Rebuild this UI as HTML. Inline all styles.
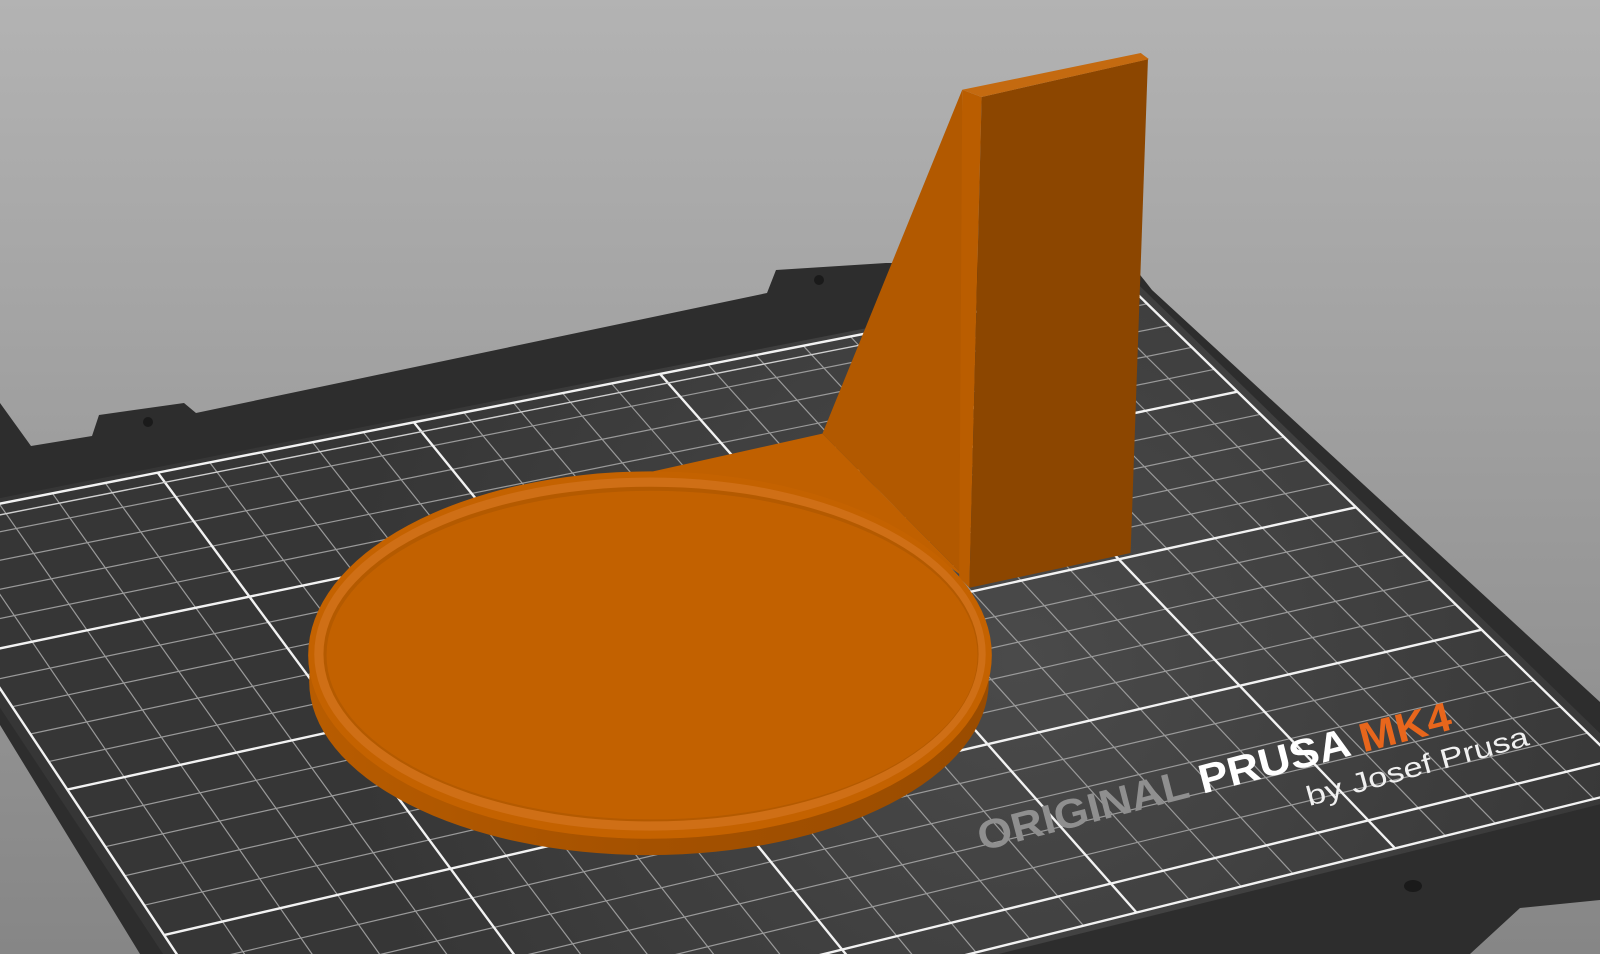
<!DOCTYPE html>
<html><head><meta charset="utf-8"><style>
html,body{margin:0;padding:0;width:1600px;height:954px;overflow:hidden;background:#999}
svg{display:block}
</style></head><body>
<svg id="s" width="1600" height="954" viewBox="0 0 1600 954" xmlns="http://www.w3.org/2000/svg">
<defs>
<linearGradient id="bg" x1="0" y1="0" x2="0" y2="1">
<stop offset="0" stop-color="#b3b3b3"/><stop offset="1" stop-color="#868686"/>
</linearGradient>
<radialGradient id="spot" cx="1020" cy="660" r="680" gradientUnits="userSpaceOnUse">
<stop offset="0" stop-color="#4a4a4a"/><stop offset="1" stop-color="#363636"/>
</radialGradient>
<linearGradient id="side" x1="0" y1="0" x2="1" y2="0">
<stop offset="0" stop-color="#b85c00"/><stop offset="0.5" stop-color="#a45100"/><stop offset="1" stop-color="#9a4c00"/>
</linearGradient>
<clipPath id="sheetclip"><polygon id="sheetpoly2" points=""/></clipPath>
</defs>
<rect width="1600" height="954" fill="url(#bg)"/>
<polygon fill="#2d2d2d" points="0,403 31,446 92,436 99,415 184,403 196,413 767,293 776,270 886,263 1130,262 1152,290 1600,702 1600,900 1520,908 1470,954 140,954 0,725"/>
<circle cx="148" cy="422" r="5" fill="#1a1a1a"/>
<circle cx="819" cy="280" r="5" fill="#1a1a1a"/>
<polygon id="sheet" fill="url(#spot)" points=""/>
<g id="grid" clip-path="url(#sheetclip)"></g>
<ellipse cx="1413" cy="886" rx="9" ry="6" fill="#1a1a1a"/>
<g transform="scale(1.0204)">
<text transform="translate(962,834) rotate(-14.5)" font-family="Liberation Sans, sans-serif" font-weight="bold" font-size="40" textLength="478" lengthAdjust="spacingAndGlyphs"><tspan fill="#8f8f8f">ORIGINAL </tspan><tspan fill="#ffffff">PRUSA </tspan><tspan fill="#e8661c">MK4</tspan></text>
<text transform="translate(1283,790) rotate(-15.5)" font-family="Liberation Sans, sans-serif" font-size="27" fill="#f0f0f0" textLength="225" lengthAdjust="spacingAndGlyphs">by Josef Prusa</text>
<polygon fill="#c06000" points="640,462 806,425 948,568 880,520"/>
<polygon fill="#b25900" points="943,88 806,425 948,568"/>
<polygon fill="#ba5d00" points="943,88 962,95 950,576 940,566"/>
<polygon fill="#8c4600" points="962,95 1125,58 1108,542 950,576"/>
<polygon fill="#c46a10" points="943,88 1118,52 1126,58 962,95"/>
<ellipse cx="636" cy="668" rx="333" ry="170" fill="url(#side)"/>
<ellipse cx="637" cy="642" rx="335" ry="180" fill="#c46200"/>
<ellipse cx="637" cy="641" rx="329" ry="173" fill="#cf6f16"/>
<ellipse cx="638" cy="641" rx="321" ry="164" fill="#b45a00"/>
<ellipse cx="639" cy="642" rx="319" ry="161" fill="#c26100"/>
</g>
</svg>
<script>
(function(){
var src=[[0,0],[50,0],[50,50],[0,100],[250,0],[250,50],[250,100],[250,150],[200,100],[150,150],[200,150],[150,210]];
var dst=[[-106,516],[150,465],[250,600],[72,803],[1139,297],[1222,383],[1352,502],[1490,628],[1114,558],[990,750],[1246,690],[1130,905]];
var M=[],b=[];
for(var i=0;i<src.length;i++){var x=src[i][0],y=src[i][1],X=dst[i][0],Y=dst[i][1];
M.push([x,y,1,0,0,0,-x*X,-y*X]);b.push(X);
M.push([0,0,0,x,y,1,-x*Y,-y*Y]);b.push(Y);}
var n=8,A=[],r=[];
for(var i=0;i<n;i++){A.push([]);r.push(0);for(var j=0;j<n;j++){var s=0;for(var k=0;k<M.length;k++)s+=M[k][i]*M[k][j];A[i].push(s);}
for(var k=0;k<M.length;k++)r[i]+=M[k][i]*b[k];}
for(var c=0;c<n;c++){var p=c;for(var q=c+1;q<n;q++)if(Math.abs(A[q][c])>Math.abs(A[p][c]))p=q;
var t=A[c];A[c]=A[p];A[p]=t;t=r[c];r[c]=r[p];r[p]=t;
for(var q=0;q<n;q++){if(q==c)continue;var f=A[q][c]/A[c][c];for(var k=c;k<n;k++)A[q][k]-=f*A[c][k];r[q]-=f*r[c];}}
var h=[];for(var i=0;i<n;i++)h.push(r[i]/A[i][i]);
function P(u,v){var w=h[6]*u+h[7]*v+1;return [(h[0]*u+h[1]*v+h[2])/w,(h[3]*u+h[4]*v+h[5])/w];}
var pts=[P(-2,-2),P(252,-2),P(252,212),P(-2,212)].map(function(p){return p[0].toFixed(1)+','+p[1].toFixed(1)}).join(' ');
document.getElementById('sheet').setAttribute('points',pts);
document.getElementById('sheetpoly2').setAttribute('points',pts);
var g=document.getElementById('grid'),s='';
function L(a,c,col,w){s+='<line x1="'+a[0].toFixed(1)+'" y1="'+a[1].toFixed(1)+'" x2="'+c[0].toFixed(1)+'" y2="'+c[1].toFixed(1)+'" stroke="'+col+'" stroke-width="'+w+'"/>';}
for(var u=10;u<250;u+=10){if(u%50)L(P(u,0),P(u,210),'#9a9a9a',1.2);}
for(var v=10;v<210;v+=10){if(v%50)L(P(0,v),P(250,v),'#9a9a9a',1.2);}
[50,100,150,200].forEach(function(u){L(P(u,0),P(u,210),'#f2f2f2',2.4);});
[50,100,150,200].forEach(function(v){L(P(0,v),P(250,v),'#f2f2f2',2.4);});
L(P(0,0),P(250,0),'#f2f2f2',2.4);L(P(250,0),P(250,210),'#f2f2f2',2.4);
L(P(250,210),P(0,210),'#f2f2f2',2.4);L(P(0,210),P(0,0),'#f2f2f2',2.4);
L(P(0,4),P(250,4),'#d0d0d0',1.4);
g.innerHTML=s;
})();
</script>
</body></html>
